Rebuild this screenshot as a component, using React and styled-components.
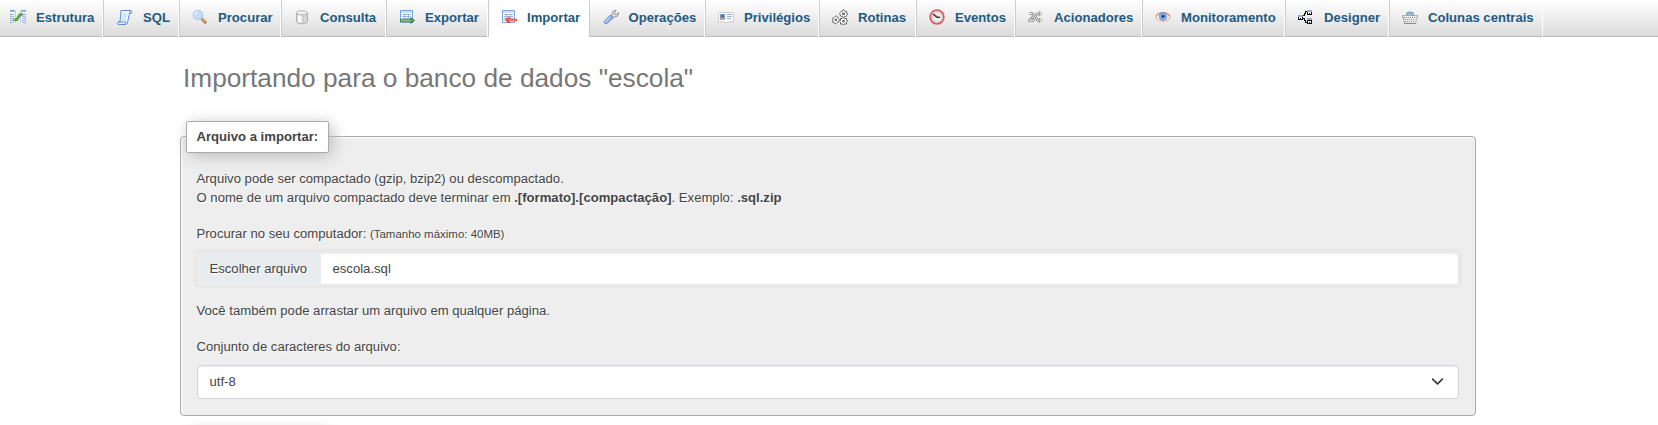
import React from "react";
import styled, { createGlobalStyle, css } from "styled-components";

const Global = createGlobalStyle`
  html, body { margin: 0; height: 425px; overflow: hidden; background: #fff; }
  body { font-family: "Liberation Sans", Arial, sans-serif; font-size: 13.12px; line-height: 19px; color: #444; }
  *, *::before, *::after { box-sizing: border-box; }
`;

const TabBar = styled.nav`
  display: flex;
  height: 37px;
  background: linear-gradient(#ffffff, #dcdcdc);
  border-bottom: 1px solid #bbb;
`;

const Tab = styled.a`
  display: flex;
  flex: 0 0 ${(p) => p.$width}px;
  height: 37px;
  padding: 8px 0 0 ${(p) => p.$pad || 12}px;
  border-left: ${(p) => (p.$first ? "0" : "1px solid #ccc")};
  border-right: 1px solid #fff;
  font-weight: bold;
  line-height: 20px;
  color: #235a81;
  white-space: nowrap;
  ${(p) => p.$active && css`background: #fff;`}
`;

const TabIcon = styled.svg`
  flex: none;
  width: 16px;
  height: 16px;
  margin: 1px 10px 0 0;
`;

const TabLabel = styled.span``;

const Page = styled.main`
  height: 388px;
  padding-left: 180px;
  overflow: hidden;
`;

const Title = styled.h2`
  margin: 0;
  padding: 23px 0 0 3px;
  height: 84px;
  font-size: 26.24px;
  font-weight: normal;
  line-height: 36px;
  color: #777;
`;

const Card = styled.section`
  width: 1296px;
  margin-top: 15px;
  height: 280px;
  padding: 0 16px 0 15.5px;
  border: 1px solid #aaa;
  border-radius: 4px;
  background: #eee;
  box-shadow: 1px 1px 2px #fff inset;
  text-shadow: 1px 1px 2px #fff;
`;

const Legend = styled.div`
  display: flex;
  align-items: center;
  width: 143px;
  height: 32px;
  margin: -16px 0 0 -10.5px;
  padding: 0 0 1px 9.5px;
  border: 1px solid #aaa;
  border-radius: 2px;
  background: #fff;
  box-shadow: 3px 3px 15px #bbb;
  font-weight: bold;
  white-space: nowrap;
`;

const NextLegend = styled(Legend)`
  margin: 14px 0 0 6px;
`;

const Text = styled.p`
  margin: ${(p) => p.$top || 0}px 0 0;
`;

const Small = styled.small`
  font-size: 11.48px;
`;

const FileField = styled.div`
  display: flex;
  height: 33px;
  margin-top: 8px;
  border: 1px solid #ebebeb;
  border-radius: 4px;
  background: #fff;
  box-shadow: inset 0 1px 2px rgba(0, 0, 0, 0.075), 0 0 0 3px #e8e8e8;
  line-height: 31px;
`;

const FileButton = styled.span`
  flex: 0 0 123px;
  width: 123px;
  padding-left: 12px;
  margin-right: -1px;
  border-radius: 3px 0 0 3px;
  background: #e9ecef;
`;

const FileName = styled.span`
  padding-left: 13px;
`;

const Select = styled.div`
  display: flex;
  align-items: center;
  justify-content: space-between;
  height: 34px;
  margin-top: 9px;
  padding: 0 14px 1px 12px;
  border: 1px solid #ced4da;
  border-radius: 4px;
  background: #fff;
  box-shadow: inset 0 1px 2px rgba(0, 0, 0, 0.075);
`;

const icons = {
  structure: (
    <>
      <path d="M0 1h5v14H0zM11 1h5v14h-5z" fill="#f0f5fa" />
      <path d="M0 1.5h5M11 1.5h5" stroke="#6fa8c9" />
      <path d="M0 2.5h5M11 2.5h5" stroke="#9fd29a" />
      <path d="M.5 4v11M5.5 2v12M10.5 2v12M15.5 4v11" stroke="#b9cbe4" />
      <path d="M1 5.5h3M1 7.5h3M1 9.5h3M1 11.5h3M1 13.5h3M12 5.5h3M12 7.5h3M12 9.5h3M12 11.5h3M12 13.5h3" stroke="#9db7dc" />
      <path d="M3.5 10.8h3.2L10 5.5h3" fill="none" stroke="#459a3f" strokeWidth="2.6" strokeLinejoin="round" />
      <path d="M4 10.6h2.4L9.8 5.2H13" fill="none" stroke="#7dc071" strokeWidth=".7" />
    </>
  ),
  sql: (
    <>
      <path d="M4 1.5h9.5c2 0 1.5 3 .5 3h-1.5l-2 9c-.3 1.5-1 2-2 2H1.5c-1.3 0-1-2.5.2-2.5H3z" fill="#e7f2ff" stroke="#5b8fd5" />
      <path d="M5 3h6.5l-2.2 10H4" fill="#d5e7fc" stroke="#fff" />
      <path d="M12.5 4.5c0-1.5.2-3 1.3-3M1.5 13h7c1 0 .4 2.2-.5 2.2" fill="none" stroke="#5b8fd5" />
    </>
  ),
  search: (
    <>
      <path d="m9.5 9.5 3.7 3.7" stroke="#aa7546" strokeWidth="3" strokeLinecap="round" />
      <path d="m9.3 9 4 4" stroke="#e1ac72" strokeWidth="1.5" />
      <circle cx="6" cy="6" r="4.6" fill="#c5defa" stroke="#b4cae8" strokeWidth="1.4" />
      <path d="M3 6c0-2 1.3-3.2 3.2-3.2" stroke="#f4faff" strokeWidth="1.3" fill="none" />
    </>
  ),
  database: (
    <>
      <path d="M2.5 3.8v8.7c0 3 11 3 11 0V3.8" fill="#d8d8d8" stroke="#b0b0b0" />
      <path d="M4 6v7c1 .6 2.2.8 3.5.8V6.5z" fill="#f8f8f8" />
      <ellipse cx="8" cy="3.8" rx="5.5" ry="2" fill="#f1f1f1" stroke="#b5b5b5" />
      <path d="M9.5 7v6.5" stroke="#c9c9c9" />
    </>
  ),
  exportTable: (
    <>
      <path d="M1.5 1.5h12v12h-12z" fill="#fff" stroke="#78a2dd" />
      <path d="M2 3h11" stroke="#cddff7" strokeWidth="2" />
      <path d="M3 5.5h9M3 7.5h9M3 9.5h9M5.5 5v5M9.5 5v5" stroke="#9eb5ce" />
      <path d="M1 10.3h10.5V8L16 11.5 11.5 15v-2.3H1z" fill="#288022" />
      <path d="M2 11.5h12" stroke="#8acb75" />
    </>
  ),
  importTable: (
    <>
      <path d="M1.5 1.5h12v12h-12z" fill="#fff" stroke="#78a2dd" />
      <path d="M2 3h11" stroke="#cddff7" strokeWidth="2" />
      <path d="M3 5.5h9M3 7.5h9M3 9.5h9M5.5 5v5M9.5 5v5" stroke="#9eb5ce" />
      <path d="M16 9.8H8.5V7.5L3.5 11l5 3.5v-2.3H16z" fill="#ef3434" />
      <path d="M5.5 11h10" stroke="#ff9d94" />
    </>
  ),
  wrench: (
    <>
      <path d="M6.5 8 9 6.5C8.5 3.5 10.5 1 13 1.5l-1.7 2.2.7 1.5 1.7.3 1.7-2c.4 3-1.7 5-4.7 4.5L9 10z" fill="#dedede" stroke="#919191" />
      <path d="m7.6 8.4-4.6 4.6" stroke="#6d92d0" strokeWidth="4.4" strokeLinecap="round" />
      <path d="m7.2 8.4-4.4 4.4" stroke="#a9c7f2" strokeWidth="2.4" strokeLinecap="round" />
    </>
  ),
  card: (
    <>
      <path d="M.5 3.5h15v10H14v-1h-2v1H4v-1H2v1H.5z" fill="#fcfcfc" stroke="#cdd1d6" />
      <path d="M2 5h5v6H2z" fill="#6aa2dc" />
      <path d="M3.2 6h2.5v2.5H3.2z" fill="#8e5a40" />
      <path d="M2.5 9h4v2h-4z" fill="#d3a474" />
      <path d="M9 5.5h5M9 7.5h5M9 9.5h4" stroke="#90b2df" />
    </>
  ),
  routines: (
    <g fill="#fff" stroke="#505050" strokeWidth=".9">
      <path d="m9 2.5 1.5-.5L11.500.700 13 2l1.500.500.2 1.500 1 1-1 1.200-.700 1.300-1.500.2L11.500 8.500 10 7.300 8.500 7 8 5.500 7.300 4.500l1-1z" />
      <path d="m3 7.500 1.500-.5 1.300 1 .7 1.500 1 1-1 1.500-.7 1.500-1.300.3-1 1-1.500-1-1.300-.5L1 12 .500 10.500 1 9l1-.5z" />
      <path d="M8.500 9.500h1.500l1-1 1.500 1H14.500V11l1 1-1 1.500v1.500H12.500l-1 .5-1.500-.5H8.500v-1.500l-.8-1 .8-1z" />
      <path d="M10.500 4h2v1.500h-2zM3 10h1.500v1.500H3zM10.800 11.500h1.500V13h-1.500z" />
    </g>
  ),
  clock: (
    <>
      <circle cx="8" cy="8" r="6.9" fill="#fff" stroke="#df4f55" strokeWidth="1.5" />
      <circle cx="8" cy="8" r="5.3" fill="#eee" stroke="#a9a3a3" strokeWidth=".8" />
      <path d="m4 5 4 3.3h3" fill="none" stroke="#333" strokeWidth="1.5" />
      <path d="m5.500 5 2.600 2.600" stroke="#e54d4d" />
    </>
  ),
  triggers: (
    <g fill="none">
      <path d="M1 4.500h3L6 7l-2.500 2.500L1.500 11.500H5L9 5h3M12 11.500H10L8 9" stroke="#8c8c8c" strokeWidth="2.600" />
      <path d="M1 4.500h3L6 7l-2.500 2.500L1.500 11.500H5L9 5h3M12 11.500H10L8 9" stroke="#f0f0f0" strokeWidth="1" />
      <path d="M11.500 2.500 14 4.700 11.500 7zM11.500 9l2.500 2.500-2.500 2z" fill="#fff" stroke="#8c8c8c" strokeWidth=".8" />
    </g>
  ),
  eye: (
    <>
      <path d="M.8 8C4 2.300 12 2.300 15.200 8 12 13.700 4 13.700.8 8z" fill="#fff" stroke="#e6b594" strokeWidth="1.500" />
      <path d="M1 7C4 2.300 12 2.300 15 7" fill="none" stroke="#cc987a" strokeWidth="1.100" />
      <circle cx="8" cy="7.500" r="3.700" fill="#83b4ef" stroke="#6b92d4" />
      <circle cx="8" cy="7.300" r="1.500" fill="#18366d" />
    </>
  ),
  designer: (
    <g shapeRendering="crispEdges">
      <path d="M5 6.500h1v-2h1v-2h2M5 9.500h1v2h1v2h2" fill="none" stroke="#111" />
      <path d="M9.500 2.500h4v3h-4zM.500 7.500h4v3h-4zM9.500 11.500h4v3h-4z" fill="#fff" stroke="#111" />
      <path d="M9 1h5v2H9zM0 6h5v2H0zM9 9h5v2H9z" fill="#a5a5df" />
      <path d="M2 9.500h1M11 4.500h1M11 13.500h1" stroke="#111" />
    </g>
  ),
  basket: (
    <>
      <path d="M5 6.500V5c.5-2.300 5.500-2.300 6 0v1.500" fill="#9ec6e9" stroke="#77a6cd" strokeWidth="1.800" />
      <path d="M.500 6.500h15v2h-1l-.8 6H2.300l-.8-6h-1z" fill="#ededed" stroke="#aaa" />
      <path d="M2 8.500h12M3 10.500h10M3 12.500h10" stroke="#8e8e8e" strokeDasharray="1 1" />
      <path d="M2.500 14.500h11" stroke="#888" />
    </>
  ),
};

const tabs = [
  ["Estrutura", "structure", 103, 10],
  ["SQL", "sql", 76, 13],
  ["Procurar", "search", 102],
  ["Consulta", "database", 105],
  ["Exportar", "exportTable", 102],
  ["Importar", "importTable", 101],
  ["Operações", "wrench", 116, 12.5],
  ["Privilégios", "card", 114],
  ["Rotinas", "routines", 97],
  ["Eventos", "clock", 99],
  ["Acionadores", "triggers", 127],
  ["Monitoramento", "eye", 143],
  ["Designer", "designer", 104],
  ["Colunas centrais", "basket", 154],
];

export default function App() {
  return (
    <>
      <Global />
      <TabBar>
        {tabs.map(([label, icon, width, pad], i) => (
          <Tab key={label} $width={width} $pad={pad} $first={i === 0} $active={label === "Importar"}>
            <TabIcon viewBox="0 0 16 16">{icons[icon]}</TabIcon>
            <TabLabel>{label}</TabLabel>
          </Tab>
        ))}
      </TabBar>
      <Page>
        <Title>Importando para o banco de dados "escola"</Title>
        <Card>
          <Legend>Arquivo a importar:</Legend>
          <Text $top={16}>
            Arquivo pode ser compactado (gzip, bzip2) ou descompactado.
            <br />O nome de um arquivo compactado deve terminar em <b>.[formato].[compactação]</b>. Exemplo: <b>.sql.zip</b>
          </Text>
          <Text $top={17}>
            Procurar no seu computador: <Small>(Tamanho máximo: 40MB)</Small>
          </Text>
          <FileField>
            <FileButton>Escolher arquivo</FileButton>
            <FileName>escola.sql</FileName>
          </FileField>
          <Text $top={16}>Você também pode arrastar um arquivo em qualquer página.</Text>
          <Text $top={17}>Conjunto de caracteres do arquivo:</Text>
          <Select>
            <span>utf-8</span>
            <svg width="13" height="13" viewBox="0 0 16 16">
              <path d="m2 5 6 6 6-6" fill="none" stroke="#343a40" strokeWidth="2" strokeLinecap="round" strokeLinejoin="round" />
            </svg>
          </Select>
        </Card>
        <NextLegend />
      </Page>
    </>
  );
}
